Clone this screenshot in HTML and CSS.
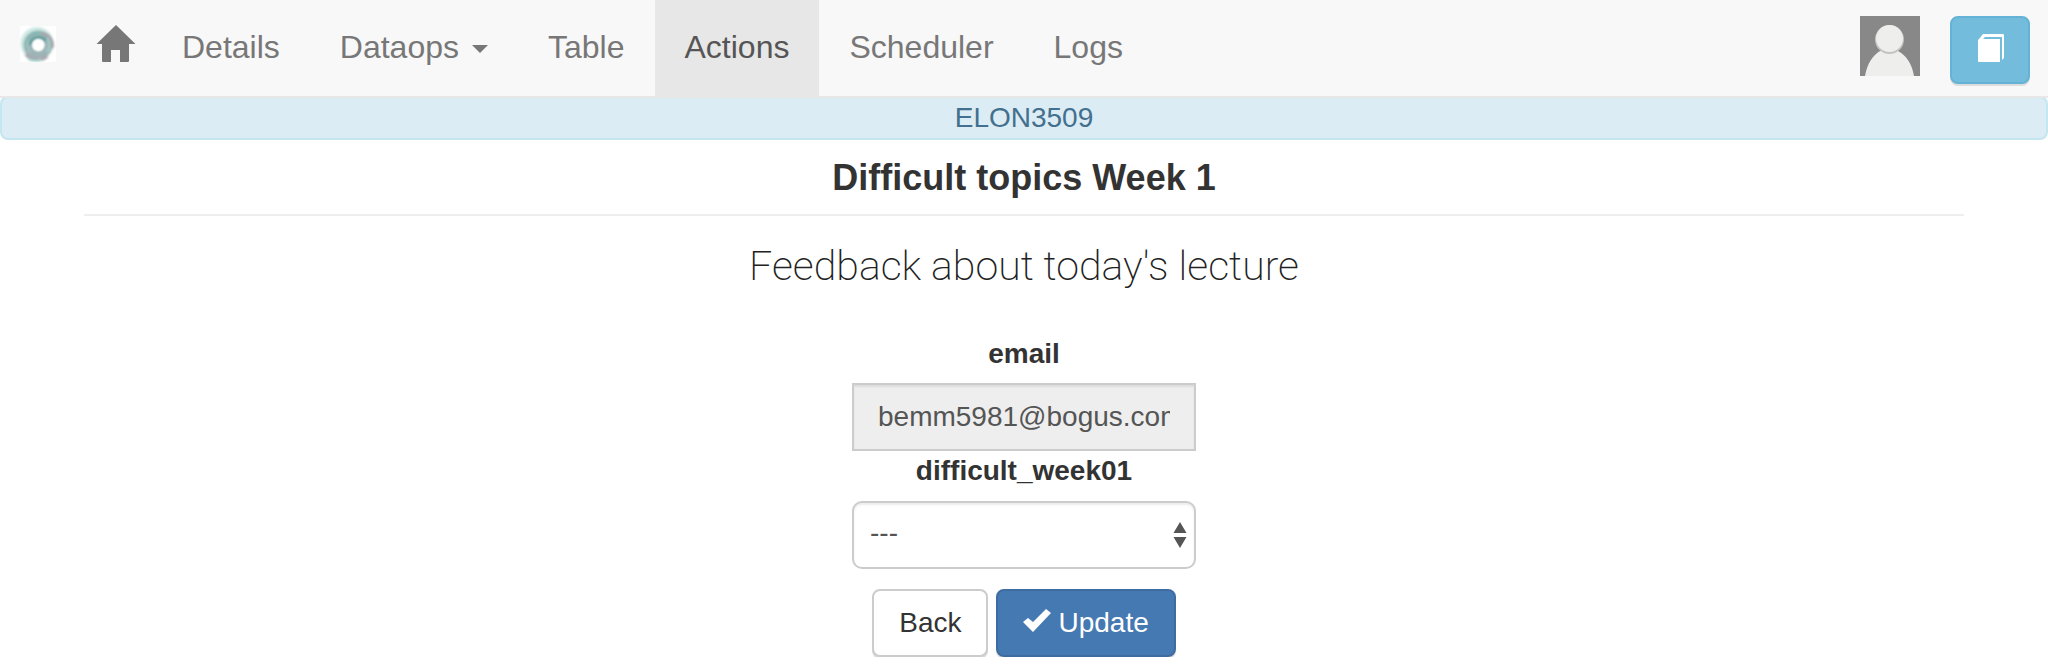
FILE: index.html
```html
<!DOCTYPE html>
<html lang="en">
<head>
<meta charset="utf-8">
<title>Difficult topics Week 1</title>
<link rel="stylesheet" href="styles.css">
</head>
<body>
<nav class="navbar">
  <a class="brand" href="#" aria-label="Start">
    <svg class="logo" viewBox="0 0 36 36" aria-hidden="true">
      <defs>
        <filter id="soft" x="-20%" y="-20%" width="140%" height="140%"><feGaussianBlur stdDeviation="0.9"/></filter>
      </defs>
      <rect width="36" height="36" fill="#fff"/>
      <g fill="none" filter="url(#soft)">
        <circle cx="17" cy="17.500" r="14" stroke="#cfe9e4" stroke-width="5"/>
        <circle cx="18" cy="19" r="10" stroke="#9cb4b5" stroke-width="9"/>
        <path d="M8 24a12 12 0 0 1 13-17" stroke="#82b8b4" stroke-width="3"/>
        <path d="M10 19a9 9 0 0 1 16-4" stroke="#5f9c99" stroke-width="3"/>
        <path d="M22 7a12 12 0 0 1 10 15" stroke="#a6a4ac" stroke-width="3"/>
        <path d="M27 12a11 11 0 0 1 0 14" stroke="#a3d0ca" stroke-width="2"/>
        <path d="M6 28a15 15 0 0 0 21 2" stroke="#a9a9b1" stroke-width="4"/>
        <path d="M9 14a10 10 0 0 0 2 13" stroke="#b9d6d3" stroke-width="1"/>
        <path d="M8 33a15 15 0 0 0 13 1" stroke="#a5ded2" stroke-width="2"/>
      </g>
      <circle cx="18.500" cy="19" r="6" fill="#fff" filter="url(#soft)"/>
    </svg>
  </a>
  <ul class="menu">
    <li><a class="item home" href="#" aria-label="Home">
      <svg class="home-icon" viewBox="0 0 40 38" aria-hidden="true"><path d="M20 0 39.500 19H33V36Q33 37 32 37H24V25H15V37H7Q6 37 6 36V19H.5Z" fill="currentColor"/></svg>
    </a></li>
    <li><a class="item" href="#">Details</a></li>
    <li><a class="item" href="#">Dataops <span class="caret"></span></a></li>
    <li><a class="item" href="#">Table</a></li>
    <li><a class="item active" href="#" aria-current="page">Actions</a></li>
    <li><a class="item" href="#">Scheduler</a></li>
    <li><a class="item" href="#">Logs</a></li>
  </ul>
  <div class="account">
    <a class="profile" href="#" aria-label="Profile">
      <svg class="avatar" viewBox="0 0 60 60" aria-hidden="true">
        <rect width="60" height="60" fill="#888"/>
        <path d="M5 60C7 48 13 39 20 35Q29 31 38 35C46 39 52 48 54 60Z" fill="#eeeeec"/>
        <circle cx="29.500" cy="23.500" r="14.500" fill="#c3c3c1"/>
        <circle cx="29.500" cy="22.500" r="13.500" fill="#eeeeec"/>
      </svg>
    </a>
    <button class="btn btn-info" type="button" aria-label="Documentation">
      <svg class="book-icon" viewBox="0 0 28 28" aria-hidden="true">
        <path d="M1 5 5 0H25Q26 0 26 1V24L24 26V3H7L5 5H22V28H1Q0 28 0 27V6Z" fill="#fff"/>
      </svg>
    </button>
  </div>
</nav>
<div class="alert">ELON3509</div>
<main class="content">
  <h1 class="title">Difficult topics Week 1</h1>
  <hr class="rule">
  <p class="lead">Feedback about today's lecture</p>
  <form class="form">
    <label class="label" for="email">email</label>
    <input class="control" id="email" type="text" value="bemm5981@bogus.com" readonly>
    <label class="label" for="week">difficult_week01</label>
    <div class="select-wrap">
      <select class="control select" id="week"><option>---</option></select>
      <svg class="arrows" viewBox="0 0 14 28" aria-hidden="true"><path d="M7 1 13.500 12H.5ZM.5 16H13.500L7 27Z" fill="#555"/></svg>
    </div>
    <div class="actions">
      <button class="btn btn-default" type="button">Back</button>
      <button class="btn btn-primary" type="button"><svg class="check-icon" viewBox="0 0 28 26" aria-hidden="true"><path d="M0 14 5 10 10 14 23 1 28 5 10 24Z" fill="#fff"/></svg>Update</button>
    </div>
  </form>
</main>
</body>
</html>
```
FILE: styles.css
```css
* { box-sizing: border-box; }
body {
  margin: 0;
  background: #fff;
  color: #333;
  font: 28px/40px "Liberation Sans", Arial, sans-serif;
}
.navbar {
  position: relative;
  display: flex;
  align-items: flex-start;
  background: #f8f8f8;
  border-bottom: 2px solid #e7e7e7;
}
.brand { padding: 26px 10px 0 20px; }
.logo { display: block; width: 36px; height: 36px; }
.menu {
  display: flex;
  margin: 0;
  padding: 0;
  list-style: none;
}
.item {
  display: flex;
  align-items: center;
  height: 96px;
  padding: 0 30px 2px;
  color: #777;
  font-size: 32px;
  text-decoration: none;
}
.item.active { background: #e7e7e7; color: #555; }
.home-icon { width: 40px; height: 38px; margin-bottom: 6px; }
.item.home { padding-right: 16px; }
.caret {
  margin: 4px 0 0 13px;
  border: 8px solid transparent;
  border-top-color: currentColor;
  border-bottom: 0;
}
.account {
  display: flex;
  gap: 30px;
  margin-left: auto;
  padding: 16px 18px 0 0;
}
.avatar { display: block; width: 60px; height: 60px; }
.btn {
  display: flex;
  align-items: center;
  justify-content: center;
  height: 68px;
  padding: 0 25px;
  border: 2px solid;
  border-radius: 8px;
  box-shadow: 0 2px 0 #ddd;
  font: inherit;
}
.btn-info { width: 80px; padding: 0 0 4px 4px; background: #74bcdb; border-color: #64b3d6; }
.book-icon { width: 28px; height: 28px; }
.btn-default { background: #fff; border-color: #ccc; color: #333; }
.btn-primary { gap: 7px; background: #4579b2; border-color: #3e6ca1; color: #fff; }
.check-icon { width: 28px; height: 26px; margin-bottom: 4px; }
.alert {
  margin-top: -2px;
  border: 2px solid #c4e7ef;
  border-radius: 8px;
  background: #dcecf4;
  color: #43708e;
  text-align: center;
}
.content { padding: 16px 84px 0; text-align: center; }
.title { margin: 0; font-size: 36px; line-height: 44px; }
.rule { margin: 14px 0 28px; border: 0; border-top: 2px solid #eee; }
.lead {
  margin: 0 0 46px;
  color: #222;
  font-family: Roboto, sans-serif;
  font-size: 41px;
  font-weight: 200;
  line-height: 44px;
}
.form { display: flex; flex-direction: column; align-items: center; }
.label { font-weight: bold; line-height: 40px; }
.control {
  display: block;
  width: 344px;
  height: 68px;
  padding: 0 24px;
  border: 2px solid #ccc;
  border-radius: 0;
  background: #eee;
  box-shadow: inset 0 2px 2px #00000013;
  color: #555;
  font: inherit;
}
.label + .control { margin-top: 9px; }
.select-wrap { position: relative; margin-top: 10px; }
.select { padding: 0 16px 4px; border-radius: 10px; background: #fff; appearance: none; }
.arrows { position: absolute; top: 20px; right: 9px; width: 14px; height: 28px; pointer-events: none; }
.actions { display: flex; gap: 8px; margin-top: 20px; }
```
